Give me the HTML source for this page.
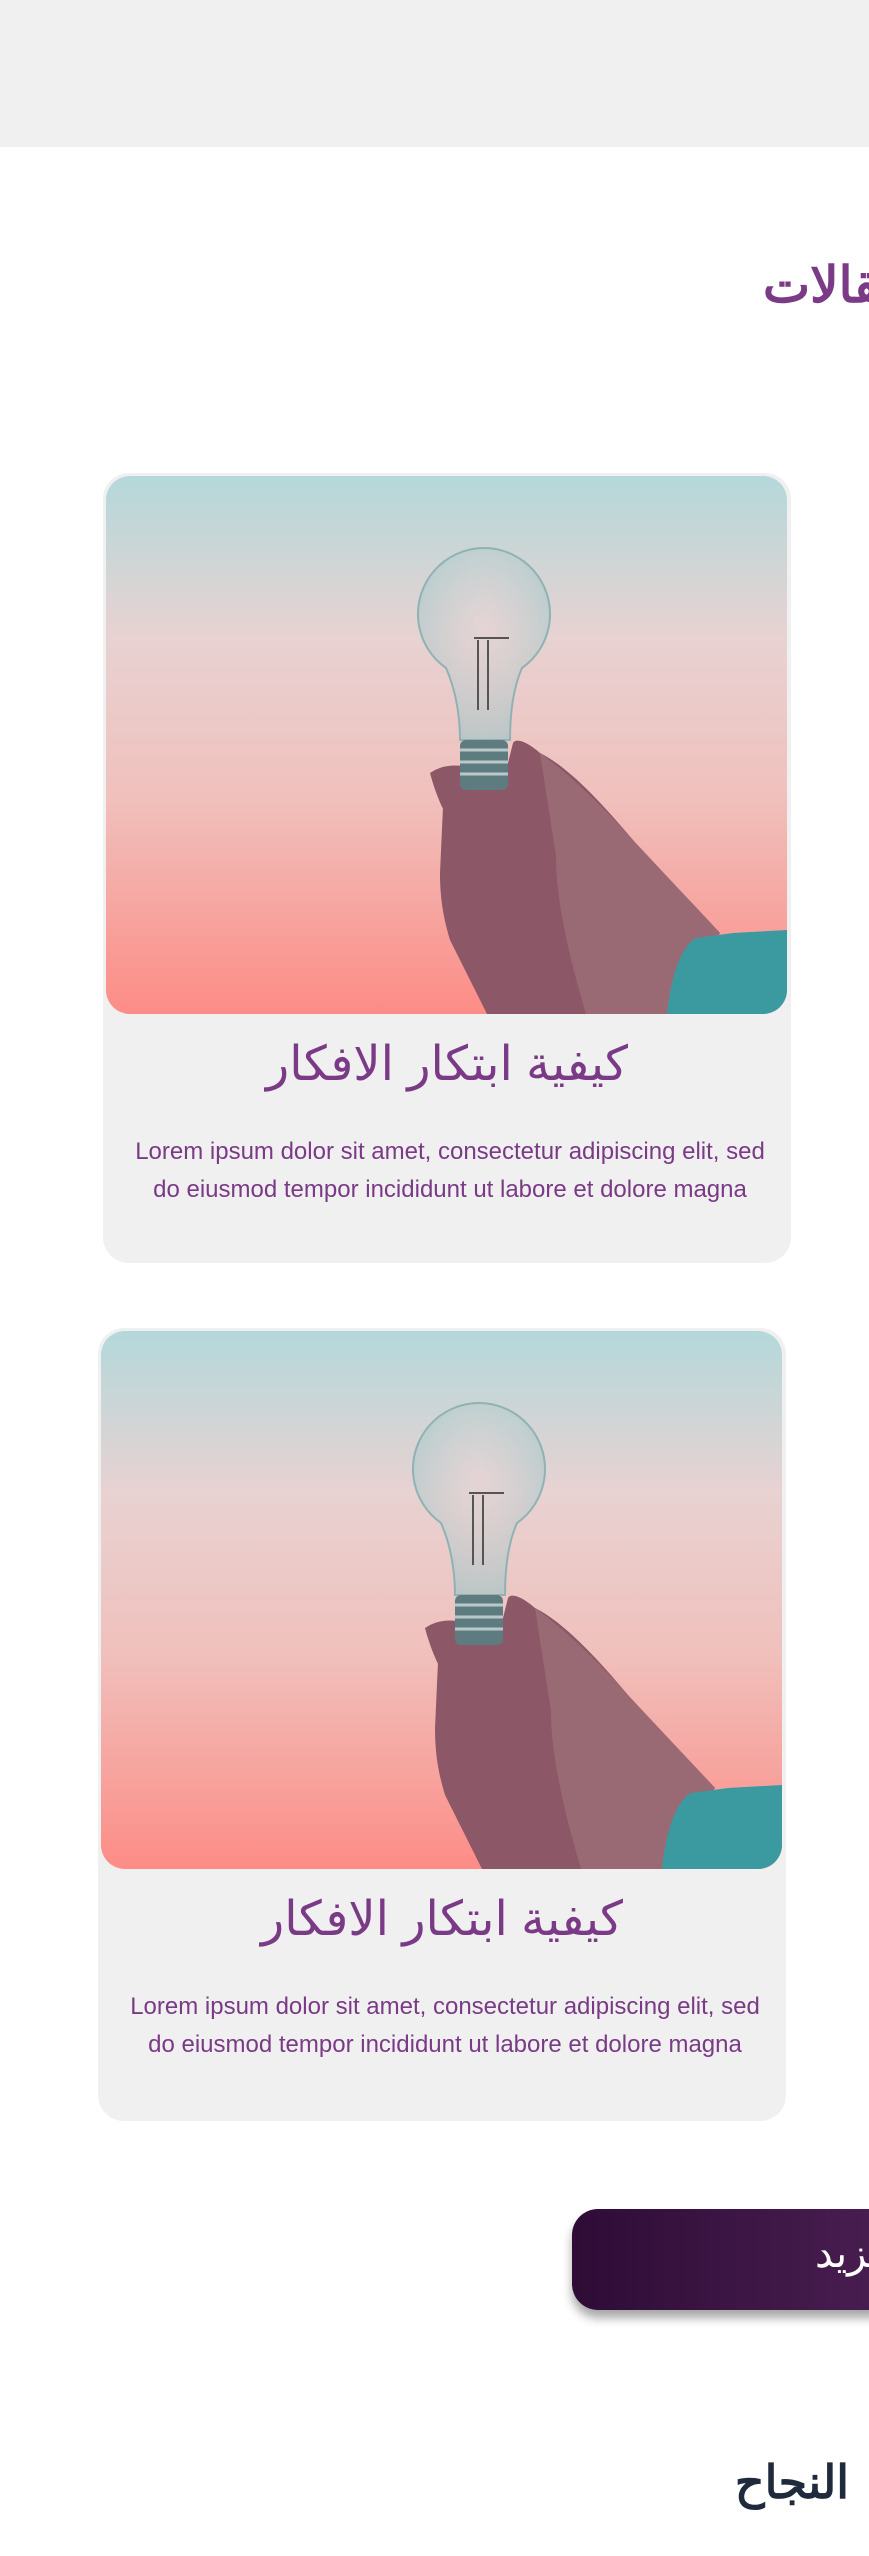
<!DOCTYPE html>
<html><head><meta charset="utf-8"><style>
*{margin:0;padding:0;box-sizing:border-box}
body{width:869px;height:2556px;background:#fff;position:relative;overflow:hidden;font-family:"Liberation Sans","Noto Sans CJK SC",sans-serif}
.hdr{position:absolute;left:0;top:0;width:869px;height:147px;background:#f0f0f0}
.ttl{position:absolute;left:763px;top:250px;font-size:50px;font-weight:bold;color:#7a3a86;white-space:nowrap;direction:rtl;line-height:70px}
.card{position:absolute;width:688px;height:790px;background:#f0f0f0;border-radius:26px}
.img{position:absolute;left:3px;top:3px;width:681px;height:538px;border-radius:24px;overflow:hidden}
.ct{position:absolute;left:0;width:100%;top:562px;text-align:center;font-size:48px;color:#7a3a86;direction:rtl;line-height:60px}
.cp{position:absolute;left:22px;width:650px;top:660px;text-align:center;font-size:24px;color:#7a3a86;line-height:38px}
.btn{position:absolute;left:572px;top:2209px;width:330px;height:101px;border-radius:26px;background:linear-gradient(90deg,#2e0c36,#4a1f52);box-shadow:0 8px 10px rgba(0,0,0,.35)}
.btn span{position:absolute;left:243px;top:22px;color:#fff;font-size:40px;direction:rtl;white-space:nowrap}
.succ{position:absolute;right:20px;top:2455px;font-size:46px;font-weight:bold;color:#1f2a3c;direction:rtl;white-space:nowrap}
</style></head><body>
<div class="hdr"></div>
<div class="ttl">المقالات</div>

<svg width="0" height="0" style="position:absolute"><defs>
<linearGradient id="sky" x1="0" y1="0" x2="0" y2="1">
<stop offset="0" stop-color="#b4d8da"/><stop offset="0.3" stop-color="#e8d2d2"/><stop offset="0.6" stop-color="#f0c0bc"/><stop offset="1" stop-color="#fd8c86"/></linearGradient>
<radialGradient id="bulb" cx="0.5" cy="0.4" r="0.6"><stop offset="0" stop-color="#e6d6d6" stop-opacity=".4"/><stop offset="1" stop-color="#9cc6c8" stop-opacity=".6"/></radialGradient>
<g id="pic">
<rect width="681" height="538" fill="url(#sky)"/>
<path d="M324 297 C330 320 340 340 337 331 L334 397 C334 430 340 450 344 464 L381 538 L561 538 L614 457 C580 420 540 380 527 364 C490 320 460 290 434 277 C420 265 410 262 407 267 L401 291 L377 297 C360 288 340 286 324 297 Z" fill="#8c5766"/>
<path d="M434 277 C480 310 527 364 527 364 L614 457 L561 538 L480 538 C460 470 450 420 450 380 Z" fill="#9a6a74"/>
<path d="M561 538 C565 500 575 470 590 462 L627 457 L681 454 L681 538 Z" fill="#3b9aa0"/>
<path d="M340 192 A66 66 0 1 1 416 192 C408 210 404 235 404 264 L354 264 C354 235 348 210 340 192 Z" fill="url(#bulb)" stroke="#8fb2b4" stroke-width="2"/>
<rect x="354" y="264" width="48" height="50" rx="6" fill="#5e7c80"/>
<path d="M354 274h48M354 286h48M354 298h48" stroke="#b9c9c9" stroke-width="3"/>
<path d="M372 164v70M382 164v70M368 162h35" stroke="#555" stroke-width="2" fill="none"/>
</g></defs></svg>

<div class="card" style="left:103px;top:473px">
<div class="img"><svg width="681" height="538"><use href="#pic"/></svg></div>
<div class="ct">كيفية ابتكار الافكار</div>
<div class="cp">Lorem ipsum dolor sit amet, consectetur adipiscing elit, sed<br>do eiusmod tempor incididunt ut labore et dolore magna</div>
</div>

<div class="card" style="left:98px;top:1328px;height:793px">
<div class="img"><svg width="681" height="538"><use href="#pic"/></svg></div>
<div class="ct">كيفية ابتكار الافكار</div>
<div class="cp">Lorem ipsum dolor sit amet, consectetur adipiscing elit, sed<br>do eiusmod tempor incididunt ut labore et dolore magna</div>
</div>

<div class="btn"><span>المزيد</span></div>
<div class="succ">النجاح</div>
</body></html>
